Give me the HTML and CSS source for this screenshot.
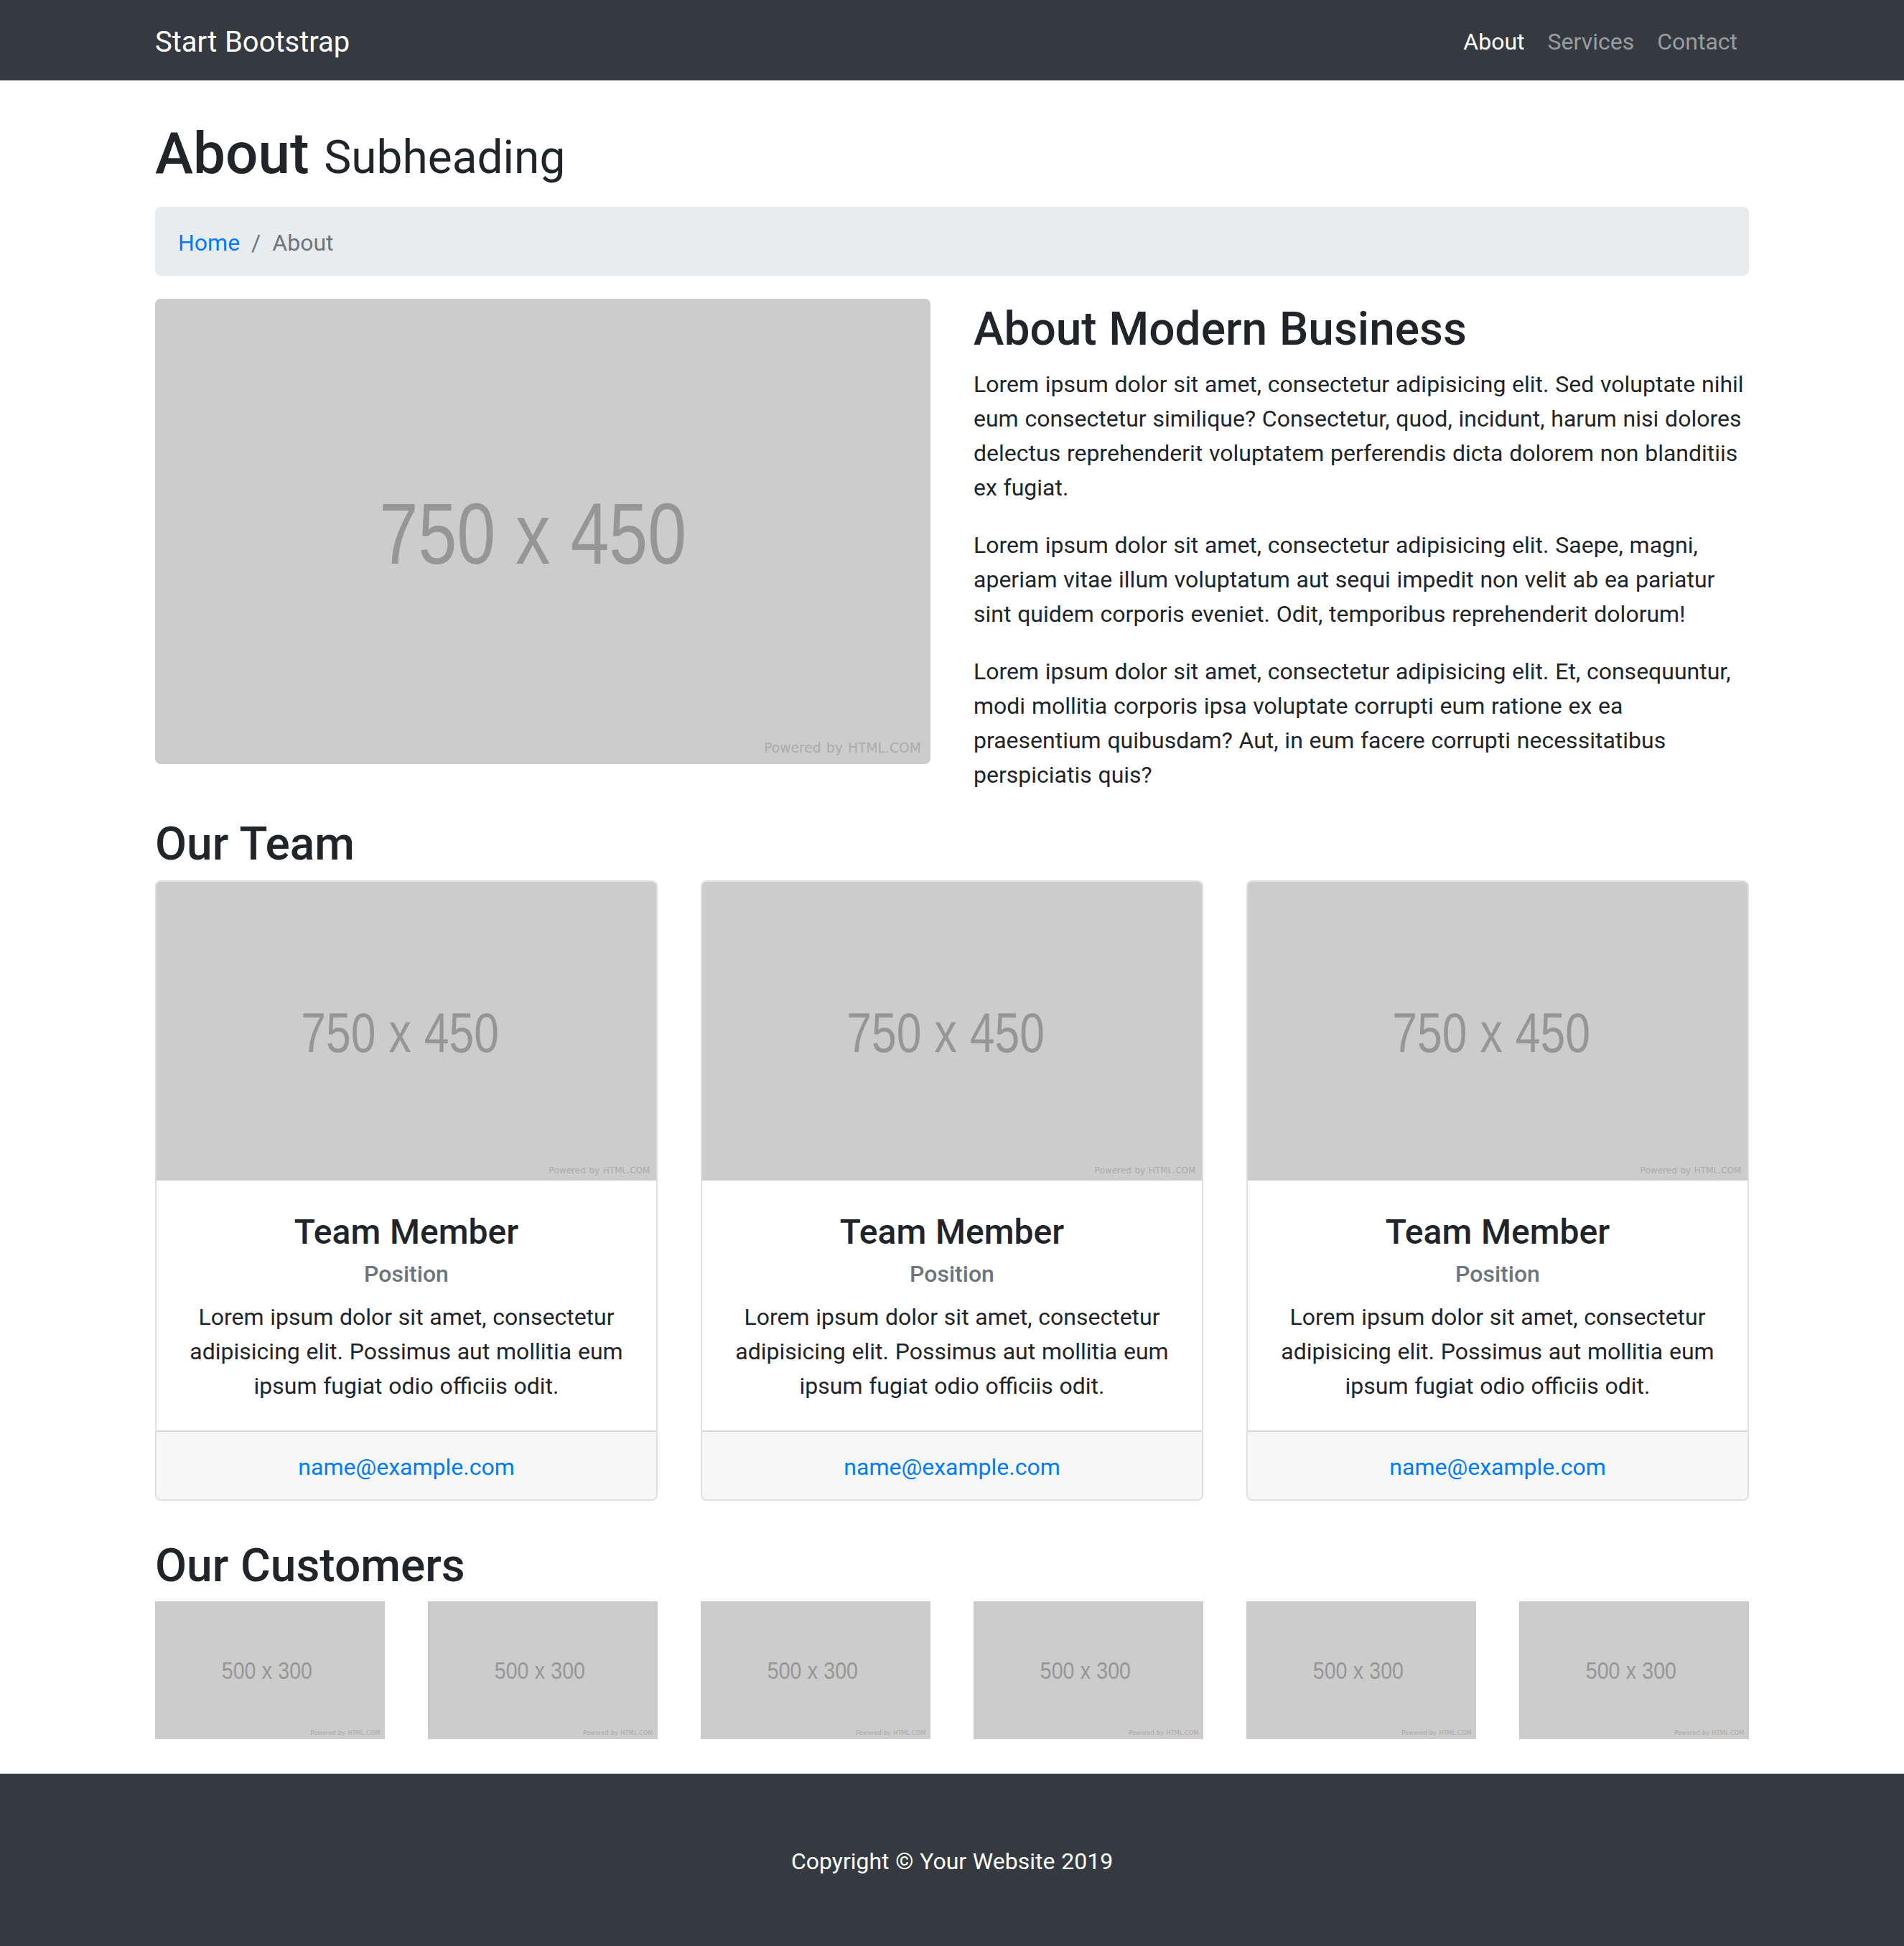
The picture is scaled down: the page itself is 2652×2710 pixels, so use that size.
FILE: index.html
```html
<!DOCTYPE html>
<html lang="en">
<head>
<meta charset="utf-8">
<title>Modern Business - About</title>
<link rel="stylesheet" href="styles.css">
</head>
<body>
<nav class="navbar">
  <div class="container navbar-inner">
    <a class="brand" href="#">Start Bootstrap</a>
    <ul class="nav-links">
      <li><a class="nav-link active" href="#">About</a></li>
      <li><a class="nav-link" href="#">Services</a></li>
      <li><a class="nav-link" href="#">Contact</a></li>
    </ul>
  </div>
</nav>

<main class="container">
  <h1 class="page-title">About <small>Subheading</small></h1>

  <ol class="breadcrumb">
    <li class="crumb"><a href="#">Home</a></li>
    <li class="crumb crumb-active">About</li>
  </ol>

  <section class="about-row">
    <div class="about-media">
      <svg class="ph ph-wide" viewBox="0 0 750 450" preserveAspectRatio="none">
        <rect class="ph-bg" width="750" height="450"/>
        <text class="ph-label" x="217" y="256" font-size="84" textLength="297" lengthAdjust="spacingAndGlyphs">750 x 450</text>
        <text class="ph-credit" x="589" y="439" font-size="13">Powered by HTML.COM</text>
      </svg>
    </div>
    <div class="about-text">
      <h2 class="section-title">About Modern Business</h2>
      <p>Lorem ipsum dolor sit amet, consectetur adipisicing elit. Sed voluptate nihil eum consectetur similique? Consectetur, quod, incidunt, harum nisi dolores delectus reprehenderit voluptatem perferendis dicta dolorem non blanditiis ex fugiat.</p>
      <p>Lorem ipsum dolor sit amet, consectetur adipisicing elit. Saepe, magni, aperiam vitae illum voluptatum aut sequi impedit non velit ab ea pariatur sint quidem corporis eveniet. Odit, temporibus reprehenderit dolorum!</p>
      <p>Lorem ipsum dolor sit amet, consectetur adipisicing elit. Et, consequuntur, modi mollitia corporis ipsa voluptate corrupti eum ratione ex ea praesentium quibusdam? Aut, in eum facere corrupti necessitatibus perspiciatis quis?</p>
    </div>
  </section>

  <h2 class="section-title">Our Team</h2>
  <section class="team-row">
    <article class="card">
      <svg class="ph card-img" viewBox="0 0 750 450" preserveAspectRatio="none">
        <rect class="ph-bg" width="750" height="450"/>
        <text class="ph-label" x="217" y="256" font-size="84" textLength="297" lengthAdjust="spacingAndGlyphs">750 x 450</text>
        <text class="ph-credit" x="589" y="439" font-size="13">Powered by HTML.COM</text>
      </svg>
      <div class="card-body">
        <h4 class="card-title">Team Member</h4>
        <h6 class="card-subtitle">Position</h6>
        <p class="card-text">Lorem ipsum dolor sit amet, consectetur adipisicing elit. Possimus aut mollitia eum ipsum fugiat odio officiis odit.</p>
      </div>
      <div class="card-footer"><a href="#">name@example.com</a></div>
    </article>
    <article class="card">
      <svg class="ph card-img" viewBox="0 0 750 450" preserveAspectRatio="none">
        <rect class="ph-bg" width="750" height="450"/>
        <text class="ph-label" x="217" y="256" font-size="84" textLength="297" lengthAdjust="spacingAndGlyphs">750 x 450</text>
        <text class="ph-credit" x="589" y="439" font-size="13">Powered by HTML.COM</text>
      </svg>
      <div class="card-body">
        <h4 class="card-title">Team Member</h4>
        <h6 class="card-subtitle">Position</h6>
        <p class="card-text">Lorem ipsum dolor sit amet, consectetur adipisicing elit. Possimus aut mollitia eum ipsum fugiat odio officiis odit.</p>
      </div>
      <div class="card-footer"><a href="#">name@example.com</a></div>
    </article>
    <article class="card">
      <svg class="ph card-img" viewBox="0 0 750 450" preserveAspectRatio="none">
        <rect class="ph-bg" width="750" height="450"/>
        <text class="ph-label" x="217" y="256" font-size="84" textLength="297" lengthAdjust="spacingAndGlyphs">750 x 450</text>
        <text class="ph-credit" x="589" y="439" font-size="13">Powered by HTML.COM</text>
      </svg>
      <div class="card-body">
        <h4 class="card-title">Team Member</h4>
        <h6 class="card-subtitle">Position</h6>
        <p class="card-text">Lorem ipsum dolor sit amet, consectetur adipisicing elit. Possimus aut mollitia eum ipsum fugiat odio officiis odit.</p>
      </div>
      <div class="card-footer"><a href="#">name@example.com</a></div>
    </article>
  </section>

  <h2 class="section-title">Our Customers</h2>
  <section class="customers-row">
    <svg class="ph customer" viewBox="0 0 500 300" preserveAspectRatio="none">
      <rect class="ph-bg" width="500" height="300"/>
      <text class="ph-label" x="145" y="169" font-size="52" textLength="197" lengthAdjust="spacingAndGlyphs">500 x 300</text>
      <text class="ph-credit" x="338" y="290" font-size="13">Powered by HTML.COM</text>
    </svg>
    <svg class="ph customer" viewBox="0 0 500 300" preserveAspectRatio="none">
      <rect class="ph-bg" width="500" height="300"/>
      <text class="ph-label" x="145" y="169" font-size="52" textLength="197" lengthAdjust="spacingAndGlyphs">500 x 300</text>
      <text class="ph-credit" x="338" y="290" font-size="13">Powered by HTML.COM</text>
    </svg>
    <svg class="ph customer" viewBox="0 0 500 300" preserveAspectRatio="none">
      <rect class="ph-bg" width="500" height="300"/>
      <text class="ph-label" x="145" y="169" font-size="52" textLength="197" lengthAdjust="spacingAndGlyphs">500 x 300</text>
      <text class="ph-credit" x="338" y="290" font-size="13">Powered by HTML.COM</text>
    </svg>
    <svg class="ph customer" viewBox="0 0 500 300" preserveAspectRatio="none">
      <rect class="ph-bg" width="500" height="300"/>
      <text class="ph-label" x="145" y="169" font-size="52" textLength="197" lengthAdjust="spacingAndGlyphs">500 x 300</text>
      <text class="ph-credit" x="338" y="290" font-size="13">Powered by HTML.COM</text>
    </svg>
    <svg class="ph customer" viewBox="0 0 500 300" preserveAspectRatio="none">
      <rect class="ph-bg" width="500" height="300"/>
      <text class="ph-label" x="145" y="169" font-size="52" textLength="197" lengthAdjust="spacingAndGlyphs">500 x 300</text>
      <text class="ph-credit" x="338" y="290" font-size="13">Powered by HTML.COM</text>
    </svg>
    <svg class="ph customer" viewBox="0 0 500 300" preserveAspectRatio="none">
      <rect class="ph-bg" width="500" height="300"/>
      <text class="ph-label" x="145" y="169" font-size="52" textLength="197" lengthAdjust="spacingAndGlyphs">500 x 300</text>
      <text class="ph-credit" x="338" y="290" font-size="13">Powered by HTML.COM</text>
    </svg>
  </section>
</main>

<footer class="site-footer">
  <p class="copyright">Copyright &copy; Your Website 2019</p>
</footer>
</body>
</html>
```

FILE: styles.css
```css
* {
  box-sizing: border-box;
}

html, body {
  margin: 0;
  padding: 0;
}

body {
  font-family: Roboto, "Open Sans", "Liberation Sans", sans-serif;
  font-size: 32px;
  line-height: 1.5;
  font-weight: 400;
  color: #212529;
  background: #fff;
  word-spacing: 0.8px;
}

a {
  color: #007bff;
  text-decoration: none;
}

.container {
  width: 100%;
  max-width: 2280px;
  margin: 0 auto;
  padding: 0 30px;
}

/* Navbar */
.navbar {
  background: #343a40;
  padding: 16px 32px;
}

.navbar-inner {
  display: flex;
  align-items: center;
  justify-content: space-between;
}

.brand {
  color: #fff;
  font-size: 40px;
  line-height: 60px;
  padding: 13px 0 7px;
  margin-right: 32px;
  white-space: nowrap;
}

.nav-links {
  display: flex;
  list-style: none;
  margin: 0;
  padding: 0;
}

.nav-link {
  display: block;
  padding: 18px 16px 14px;
  line-height: 48px;
  color: rgba(255, 255, 255, 0.5);
}

.nav-link.active {
  color: #fff;
}

/* Headings */
.page-title {
  margin: 48px 0 26px;
  padding-top: 6px;
  font-size: 80px;
  font-weight: 500;
  line-height: 1.2;
}

.page-title small {
  font-size: 80%;
  font-weight: 400;
}

.section-title {
  margin: 0 0 11px;
  padding-top: 5px;
  font-size: 64px;
  font-weight: 500;
  line-height: 1.2;
}

/* Breadcrumb */
.breadcrumb {
  display: flex;
  list-style: none;
  margin: 0 0 32px;
  padding: 26px 32px 22px;
  background: #e9ecef;
  border-radius: 8px;
}

.crumb + .crumb {
  padding-left: 16px;
}

.crumb + .crumb::before {
  content: "/";
  padding-right: 16px;
  color: #6c757d;
}

.crumb-active {
  color: #6c757d;
}

/* Placeholder images */
.ph {
  display: block;
}

.ph-bg {
  fill: #cccccc;
}

.ph-label {
  fill: #969696;
  font-family: "Liberation Sans", Arial, sans-serif;
}

.ph-credit {
  fill: #ababab;
  font-family: "DejaVu Sans", sans-serif;
}

/* About row */
.about-row {
  display: flex;
  gap: 60px;
}

.about-media {
  flex: 0 0 1080px;
}

.ph-wide {
  width: 1080px;
  height: 648px;
  border-radius: 8px;
  margin-bottom: 48px;
}

.about-text {
  flex: 0 0 1080px;
}

.about-text p {
  margin: 0 0 30px;
  padding-top: 2px;
}

/* Team */
.team-row {
  display: grid;
  grid-template-columns: repeat(3, 700px);
  gap: 60px;
  margin-bottom: 48px;
}

.card {
  display: flex;
  flex-direction: column;
  border: 2px solid rgba(0, 0, 0, 0.125);
  border-radius: 8px;
  overflow: hidden;
  text-align: center;
}

.card-img {
  width: 696px;
  height: 416px;
}

.card-body {
  flex: 1 1 auto;
  padding: 40px 40px 38px;
}

.card-title {
  margin: 0 0 21px;
  padding-top: 3px;
  font-size: 48px;
  font-weight: 500;
  line-height: 1.2;
}

.card-subtitle {
  margin: -12px 0 14px;
  padding-top: 2px;
  font-size: 32px;
  font-weight: 500;
  line-height: 1.2;
  color: #6c757d;
}

.card-text {
  margin: 0;
  padding-top: 2px;
}

.card-footer {
  padding: 25px 40px 21px;
  background: rgba(0, 0, 0, 0.03);
  border-top: 2px solid rgba(0, 0, 0, 0.125);
}

/* Customers */
.customers-row {
  display: grid;
  grid-template-columns: repeat(6, 320px);
  gap: 60px;
  padding-bottom: 48px;
}

.customer {
  width: 320px;
  height: 192px;
}

/* Footer */
.site-footer {
  background: #343a40;
  padding: 98px 0 94px;
}

.copyright {
  margin: 0;
  text-align: center;
  color: #fff;
}
```
